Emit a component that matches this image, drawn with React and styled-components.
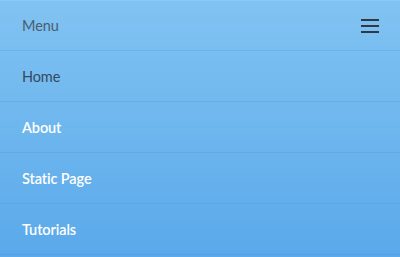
import React from "react";
import styled, { createGlobalStyle } from "styled-components";

const GlobalStyle = createGlobalStyle`
  html, body {
    margin: 0;
    padding: 0;
  }
  body {
    font-family: Lato, "Open Sans", sans-serif;
  }
`;

const items = [
  { label: "Home", dark: true },
  { label: "About" },
  { label: "Static Page" },
  { label: "Tutorials" },
];

const Nav = styled.nav`
  width: 400px;
  height: 257px;
  background: linear-gradient(to bottom, #81c3f2 0%, #5aa9ea 100%);
  border-top: 1px solid #8ccaf4;
  box-sizing: border-box;
  display: flex;
  flex-direction: column;
`;

const Row = styled.div`
  flex: none;
  display: flex;
  align-items: center;
  justify-content: space-between;
  padding: 0 21px 0 22px;
  box-sizing: border-box;
  height: 51px;
  border-bottom: 1px solid rgba(60, 130, 200, 0.18);
  font-size: 14.5px;
  letter-spacing: -0.1px;
  color: ${(p) => (p.$dark ? "#34495e" : "#ffffff")};
  font-weight: ${(p) => (p.$dark ? 400 : 600)};
`;

const Title = styled(Row)`
  height: 50px;
  color: #4b5d6e;
  font-weight: 400;
`;

const Burger = styled.span`
  display: flex;
  flex-direction: column;
  gap: 4px;
  width: 18px;
  span {
    display: block;
    height: 2px;
    background: #2f3a44;
  }
`;

export default function App() {
  return (
    <>
      <GlobalStyle />
      <Nav>
        <Title>
          <span>Menu</span>
          <Burger>
            <span />
            <span />
            <span />
          </Burger>
        </Title>
        {items.map((item) => (
          <Row key={item.label} $dark={item.dark}>
            {item.label}
          </Row>
        ))}
      </Nav>
    </>
  );
}
